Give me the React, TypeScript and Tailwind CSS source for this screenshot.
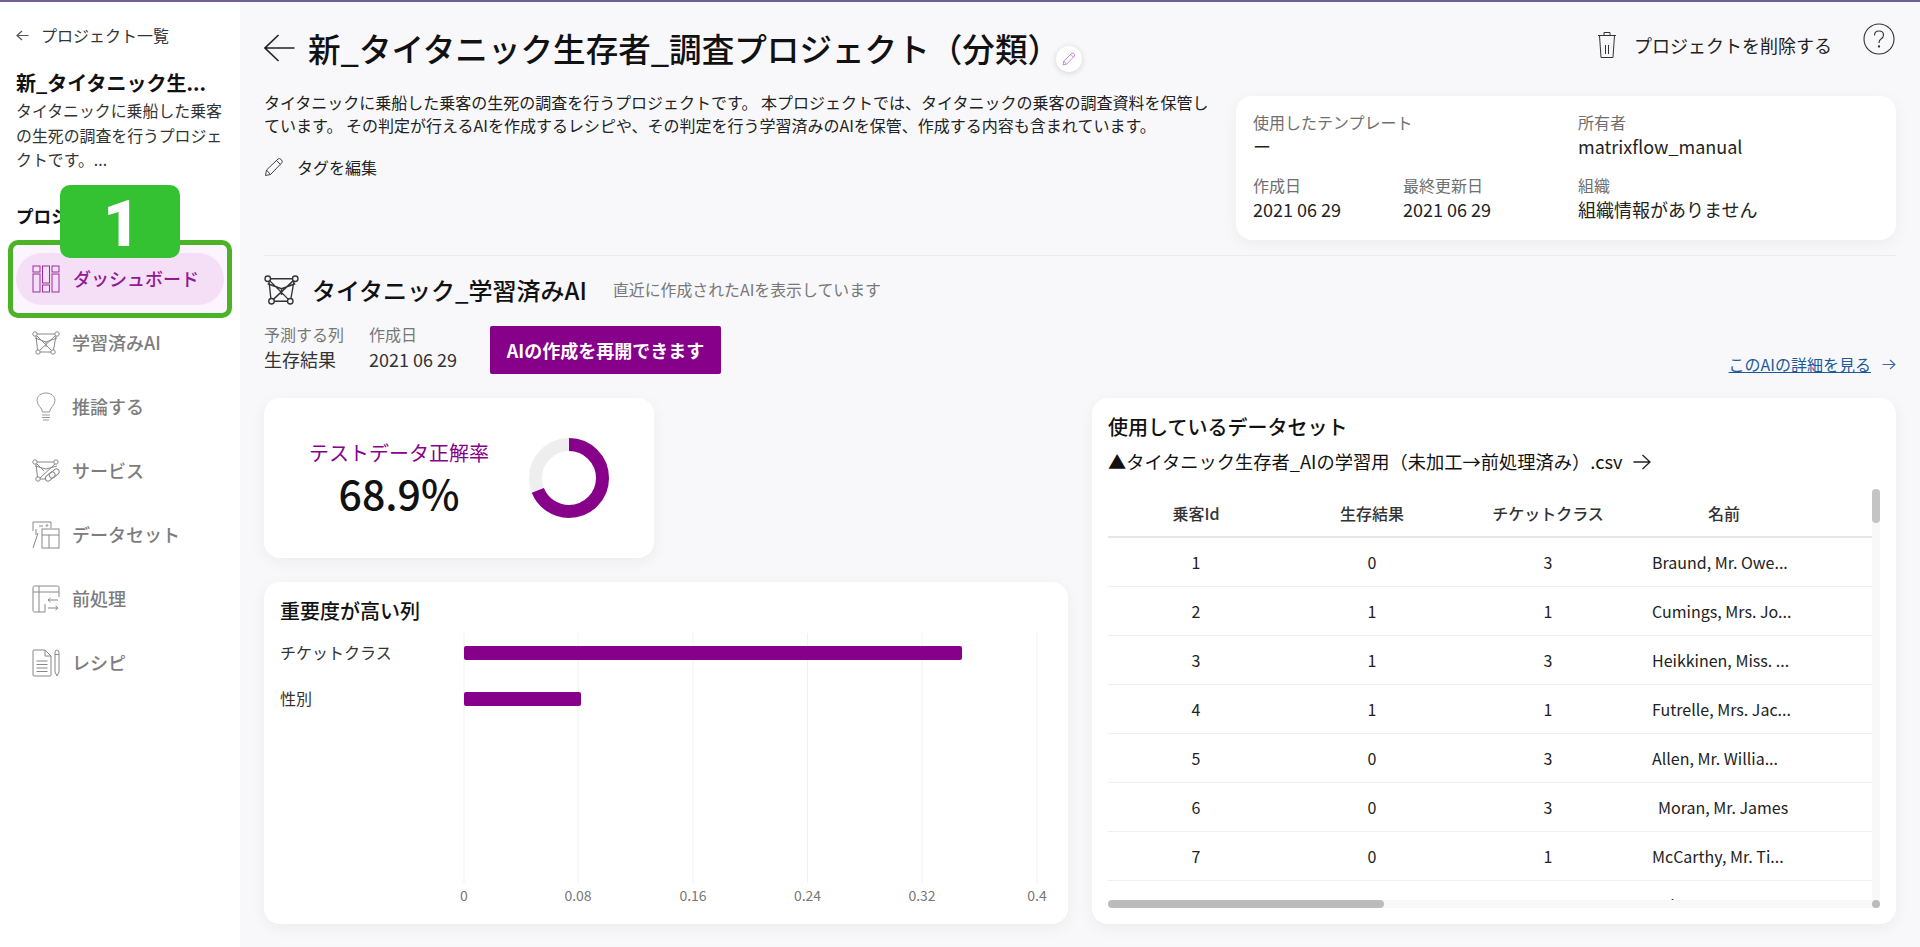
import React from "react";

const P = "#860089";

function Arrow({ w, h, dir = "left", color = "#222", sw = 1.5 }: { w: number; h: number; dir?: "left" | "right"; color?: string; sw?: number }) {
  const d =
    dir === "left"
      ? `M${w - 0.5} ${h / 2}H1M${h / 2 + 0.5} 1L1 ${h / 2}L${h / 2 + 0.5} ${h - 1}`
      : `M0.5 ${h / 2}H${w - 1}M${w - h / 2 - 0.5} 1L${w - 1} ${h / 2}L${w - h / 2 - 0.5} ${h - 1}`;
  return (
    <svg width={w} height={h} viewBox={`0 0 ${w} ${h}`} fill="none" stroke={color} strokeWidth={sw} className="shrink-0">
      <path d={d} />
    </svg>
  );
}

function DashIcon() {
  return (
    <svg width="28" height="28" viewBox="0 0 28 28" fill="none" stroke={P} strokeWidth="1" className="shrink-0 opacity-80">
      <rect x="1" y="1" width="7" height="6" />
      <rect x="1" y="9" width="7" height="18" />
      <rect x="10.5" y="1" width="7" height="17" />
      <rect x="10.5" y="20" width="7" height="7" />
      <rect x="20" y="1" width="7" height="6" />
      <rect x="20" y="9" width="7" height="18" />
    </svg>
  );
}

function NetIcon({ w = 28, h = 24, color = "#888", sw = 1 }: { w?: number; h?: number; color?: string; sw?: number }) {
  return (
    <svg width={w} height={h} viewBox="0 0 28 24" fill="none" stroke={color} strokeWidth={sw} className="shrink-0">
      <circle cx="3" cy="3" r="2.2" />
      <circle cx="25" cy="3" r="2.2" />
      <circle cx="6" cy="21" r="2.2" />
      <circle cx="21" cy="21" r="2.2" />
      <path d="M5 3H23M4 5L5.500 19M24 5L21.500 19M8 21H19M4.500 4.500L19.500 19.500M23.500 4.500L7.500 19.500M3 7L14 11L25 7M14 11L14 16" />
    </svg>
  );
}

function BulbIcon() {
  return (
    <svg width="20" height="30" viewBox="0 0 20 30" fill="none" stroke="#999" strokeWidth="1" className="shrink-0 ml-1">
      <path d="M6.500 20C6 15.500 1 13.500 1 8.500C1 4 5 1 10 1C15 1 19 4 19 8.500C19 13.500 14 15.500 13.500 20Z" />
      <path d="M6 23H14M6 25.500H14M7 28H13" />
    </svg>
  );
}

function ServiceIcon() {
  return (
    <svg width="28" height="24" viewBox="0 0 28 24" fill="none" stroke="#888" strokeWidth="1" className="shrink-0">
      <circle cx="3" cy="3" r="2.200" />
      <circle cx="24" cy="3" r="2.200" />
      <circle cx="6" cy="20" r="2.200" />
      <path d="M5 3H22M4 5L5.500 18M4.500 4.500L12 12M23 5L8 19M3 7L14 10L25 7M8 20H14" />
      <rect x="13" y="15" width="11" height="5.500" rx="2.700" transform="rotate(-40 18 18)" />
      <rect x="17" y="12" width="11" height="5.500" rx="2.700" transform="rotate(-40 22 15)" />
    </svg>
  );
}

function DataIcon() {
  return (
    <svg width="28" height="28" viewBox="0 0 28 28" fill="none" stroke="#888" strokeWidth="1" className="shrink-0">
      <path d="M1 10V1H19V7M1 27L6 12" />
      <rect x="10" y="8" width="17" height="19" />
      <path d="M10 14H27M17 14V27M7 5H11M4 14L4 8" />
      <circle cx="15" cy="4.500" r="0.800" />
    </svg>
  );
}

function PreIcon() {
  return (
    <svg width="28" height="28" viewBox="0 0 28 28" fill="none" stroke="#888" strokeWidth="1" className="shrink-0">
      <path d="M13 27H2.500Q1 27 1 25.500V2.500Q1 1 2.500 1H25.500Q27 1 27 2.500V12" />
      <path d="M1 7H27M7 1V27M13 19V27" />
      <path d="M26 15H16M18.500 13L16 15L18.500 17M16 23H26M23.500 21L26 23L23.500 25" />
    </svg>
  );
}

function RecipeIcon() {
  return (
    <svg width="28" height="28" viewBox="0 0 28 28" fill="none" stroke="#888" strokeWidth="1" className="shrink-0">
      <path d="M1 2Q1 1 2 1H13L19 7V26Q19 27 18 27H2Q1 27 1 26Z" />
      <path d="M13 1V7H19M4.500 12H15.500M4.500 15.500H15.500M4.500 19H15.500M4.500 22.500H15.500" />
      <path d="M23 3.500Q23 1 25 1Q27 1 27 3.500V23L25 27L23 23Z" />
      <path d="M23 5.500H27" />
    </svg>
  );
}

function PencilIcon({ size, color, sw = 1 }: { size: number; color: string; sw?: number }) {
  return (
    <svg width={size} height={size} viewBox="0 0 20 20" fill="none" stroke={color} strokeWidth={sw} className="shrink-0">
      <path d="M1.500 18.500L2.500 13L14 2Q15.500 0.800 17.200 2.500Q19 4.300 17.800 5.800L6.500 17.500Z" />
      <path d="M2.500 13L6.500 17.500M12.500 3.500L16.500 7.500" />
    </svg>
  );
}

function TrashIcon() {
  return (
    <svg width="20" height="28" viewBox="0 0 20 28" fill="none" stroke="#333" strokeWidth="1" className="shrink-0">
      <path d="M1 4.500H19M7 4.500V1.500H13V4.500" />
      <path d="M2.500 4.500L4 26.500H16L17.500 4.500" />
      <path d="M8.500 14V23M11.500 14V23" />
    </svg>
  );
}

function HelpIcon() {
  return (
    <svg width="32" height="32" viewBox="0 0 32 32" fill="none" stroke="#333" strokeWidth="1.100" className="shrink-0">
      <circle cx="16" cy="16" r="15" />
      <path d="M11.500 12.500Q11.500 8 16 8Q20.500 8 20.500 12Q20.500 14.500 18 16Q16 17.200 16 20" />
      <circle cx="16" cy="23.500" r="0.600" />
    </svg>
  );
}

function Donut() {
  const r = 33.5;
  const c = 2 * Math.PI * r;
  return (
    <svg width="80" height="80" viewBox="0 0 80 80" fill="none" strokeWidth="13" className="shrink-0">
      <circle cx="40" cy="40" r={r} stroke="#eeeeee" />
      <circle cx="40" cy="40" r={r} stroke={P} strokeDasharray={`${c * 0.689} ${c}`} transform="rotate(-90 40 40)" />
    </svg>
  );
}

const NAV = [
  { label: "学習済みAI", icon: <NetIcon /> },
  { label: "推論する", icon: <BulbIcon /> },
  { label: "サービス", icon: <ServiceIcon /> },
  { label: "データセット", icon: <DataIcon /> },
  { label: "前処理", icon: <PreIcon /> },
  { label: "レシピ", icon: <RecipeIcon /> },
];

const ROWS = [
  ["1", "0", "3", "Braund, Mr. Owe..."],
  ["2", "1", "1", "Cumings, Mrs. Jo..."],
  ["3", "1", "3", "Heikkinen, Miss. ..."],
  ["4", "1", "1", "Futrelle, Mrs. Jac..."],
  ["5", "0", "3", "Allen, Mr. Willia..."],
  ["6", "0", "3", "Moran, Mr. James"],
  ["7", "0", "1", "McCarthy, Mr. Ti..."],
  ["8", "0", "3", "Palsson, Maste..."],
];

function Sidebar() {
  return (
    <aside className="w-[240px] shrink-0 bg-white flex flex-col">
      <div className="flex items-center gap-[12px] pl-4 pt-[20px] h-[46px] text-[16px] leading-6 text-[#333]">
        <Arrow w={13} h={11} color="#555" sw={1.2} />
        <span>プロジェクト一覧</span>
      </div>
      <div className="pl-4 pr-3 pt-[22px]">
        <div className="text-[20px] leading-[26px] font-bold text-[#111] whitespace-nowrap">新_タイタニック生...</div>
        <p className="text-[15.9px] leading-[24.5px] text-[#333] w-[214px] mt-[3px]">タイタニックに乗船した乗客の生死の調査を行うプロジェクトです。...</p>
      </div>
      <div className="relative pl-4 mt-[30px] text-[17.6px] leading-[26px] font-bold text-[#111]">
        プロジェクト
        <div className="absolute left-[60px] top-[-18px] w-[120px] h-[73px] rounded-[10px] bg-[#34c232] z-20 flex items-center justify-center pt-[7px] pl-[3px] text-white text-[64px] font-black font-['Roboto',sans-serif]">
          1
        </div>
      </div>
      <div className="mx-2 mt-[11px] h-[78px] rounded-[10px] border-[5px] border-[#4bb325] bg-[#fcf5ff] flex items-center relative z-10">
        <div className="ml-[3px] w-[208px] h-[52px] rounded-full bg-[#f4dff7] flex items-center gap-[13px] pl-[16px] text-[18px] font-medium text-[#8f1a93]">
          <DashIcon />
          <span>ダッシュボード</span>
        </div>
      </div>
      <div className="flex flex-col">
        {NAV.map((n) => (
          <div key={n.label} className="flex items-center h-[64px] pl-8 text-[18px] font-medium text-[#7d7d7d] first:mt-[-7px]">
            <div className="w-[40px] flex items-center justify-start">{n.icon}</div>
            <span>{n.label}</span>
          </div>
        ))}
      </div>
    </aside>
  );
}

function Meta({ label, value, className = "" }: { label: string; value: string; className?: string }) {
  return (
    <div className={className}>
      <div className="text-[16px] leading-[24px] text-[#6f6f6f]">{label}</div>
      <div className="text-[18px] leading-[25px] text-[#222] whitespace-nowrap">{value}</div>
    </div>
  );
}

function Header() {
  return (
    <div className="flex h-[254px] border-b border-[#ececf0]">
      <div className="flex-1 min-w-0 pt-[27px]">
        <div className="flex items-center h-[38px]">
          <Arrow w={31} h={28} sw={1.6} />
          <h1 className="ml-[13px] text-[32.6px] leading-[38px] font-medium text-[#111] whitespace-nowrap">新_タイタニック生存者_調査プロジェクト（分類）</h1>
          <div className="-ml-[4px] mt-[22px] w-[26px] h-[26px] rounded-full bg-white shadow-[0_1px_6px_rgba(0,0,0,0.15)] flex items-center justify-center">
            <PencilIcon size={14} color="#b55cc0" />
          </div>
        </div>
        <p className="mt-[24px] text-[16px] leading-[23px] text-[#222] whitespace-nowrap">
          タイタニックに乗船した乗客の生死の調査を行うプロジェクトです。 本プロジェクトでは、タイタニックの乗客の調査資料を保管し
          <br />
          ています。 その判定が行えるAIを作成するレシピや、その判定を行う学習済みのAIを保管、作成する内容も含まれています。
        </p>
        <div className="mt-[18px] flex items-center gap-[13px] text-[16px] leading-6 text-[#222]">
          <PencilIcon size={20} color="#444" />
          <span>タグを編集</span>
        </div>
      </div>
      <div className="w-[660px] shrink-0 flex flex-col">
        <div className="h-[94px] flex items-start justify-end pt-[22px]">
          <div className="flex items-center gap-[17px] h-[44px] mr-[31px] mt-[-1px] text-[18px] text-[#222]">
            <TrashIcon />
            <span>プロジェクトを削除する</span>
          </div>
          <div className="mr-[1px] mt-[-1px]">
            <HelpIcon />
          </div>
        </div>
        <div className="h-[144px] rounded-[16px] bg-white shadow-[0_4px_16px_rgba(0,0,0,0.05)] pl-[17px] pt-[14px] grid grid-cols-[150px_175px_1fr] grid-rows-[63px_1fr]">
          <Meta label="使用したテンプレート" value="ー" className="col-span-2" />
          <Meta label="所有者" value="matrixflow_manual" />
          <Meta label="作成日" value="2021 06 29" />
          <Meta label="最終更新日" value="2021 06 29" />
          <Meta label="組織" value="組織情報がありません" />
        </div>
      </div>
    </div>
  );
}

function ModelSection() {
  return (
    <div className="flex flex-col h-[142px]">
      <div className="flex items-center h-[34px] mt-[17px]">
        <NetIcon w={35} h={30} color="#333" sw={1.1} />
        <h2 className="ml-[13px] text-[24px] leading-[34px] font-medium text-[#111] whitespace-nowrap">タイタニック_学習済みAI</h2>
        <span className="ml-[26px] text-[15.9px] text-[#777]">直近に作成されたAIを表示しています</span>
      </div>
      <div className="flex items-end mt-[15px]">
        <div className="w-[105px]">
          <div className="text-[16px] leading-[24px] text-[#777]">予測する列</div>
          <div className="text-[18px] leading-[26px] text-[#333]">生存結果</div>
        </div>
        <div className="w-[121px]">
          <div className="text-[16px] leading-[24px] text-[#777]">作成日</div>
          <div className="text-[18px] leading-[26px] text-[#333]">2021 06 29</div>
        </div>
        <button className="w-[231px] h-[48px] mb-[-2px] rounded-[2px] bg-[#860089] text-white text-[18px] font-bold">AIの作成を再開できます</button>
        <div className="ml-auto flex items-center gap-[11px] mb-[-4px] text-[16px] text-[#1c5a9c]">
          <span className="underline">このAIの詳細を見る</span>
          <Arrow w={14} h={11} dir="right" color="#3a6ea5" sw={1.1} />
        </div>
      </div>
    </div>
  );
}

function AccuracyCard() {
  return (
    <div className="w-[390px] h-[160px] rounded-[16px] bg-white shadow-[0_4px_16px_rgba(0,0,0,0.05)] flex items-center pl-[45px]">
      <div className="w-[180px] flex flex-col items-center">
        <div className="text-[20px] leading-[28px] text-[#860089] whitespace-nowrap">テストデータ正解率</div>
        <div className="text-[41px] leading-[50px] font-medium text-[#111]">68.9%</div>
      </div>
      <div className="ml-[40px]">
        <Donut />
      </div>
    </div>
  );
}

function ImportanceCard() {
  const ticks = ["0", "0.08", "0.16", "0.24", "0.32", "0.4"];
  return (
    <div className="flex-1 rounded-[16px] bg-white shadow-[0_4px_16px_rgba(0,0,0,0.05)] pl-4 pt-[14px]">
      <h3 className="text-[20px] leading-[30px] font-medium text-[#111]">重要度が高い列</h3>
      <div className="flex mt-[7px]">
        <div className="w-[184px] shrink-0 pt-[3px] flex flex-col gap-[14px] text-[16px] leading-[32px] text-[#333]">
          <div>チケットクラス</div>
          <div>性別</div>
        </div>
        <svg width="600" height="280" viewBox="0 0 600 280" className="shrink-0 -ml-[1px] overflow-visible" fontFamily="'Noto Sans CJK JP', sans-serif">
          {[1, 115, 230, 344.5, 459, 574].map((x, i) => (
            <g key={i}>
              <line x1={x} x2={x} y1="0" y2="250" stroke="#f1f1f3" />
              <text x={x} y="268" textAnchor="middle" fontSize="14" fill="#777">
                {ticks[i]}
              </text>
            </g>
          ))}
          <rect x="1" y="13" width="498" height="14" rx="2" fill={P} />
          <rect x="1" y="59" width="117" height="14" rx="2" fill={P} />
        </svg>
      </div>
    </div>
  );
}

function DatasetCard() {
  return (
    <div className="h-[526px] rounded-[16px] bg-white shadow-[0_4px_16px_rgba(0,0,0,0.05)] px-4 pt-[14px]">
      <h3 className="text-[20px] leading-[30px] font-medium text-[#111]">使用しているデータセット</h3>
      <div className="flex items-center gap-[10px] mt-[5px] h-[30px] text-[18.25px] text-[#111] whitespace-nowrap">
        <span>▲タイタニック生存者_AIの学習用（未加工→前処理済み）.csv</span>
        <Arrow w={18} h={16} dir="right" sw={1.3} />
      </div>
      <div className="relative mt-[12px] h-[419px] overflow-hidden">
        <table className="w-[764px] table-fixed border-collapse text-[16px] text-[#222]">
          <colgroup>
            <col className="w-[176px]" />
            <col className="w-[176px]" />
            <col className="w-[176px]" />
            <col className="w-[176px]" />
            <col />
          </colgroup>
          <thead>
            <tr className="h-[48px] border-b-2 border-[#e6e6e6]">
              {["乗客Id", "生存結果", "チケットクラス", "名前", ""].map((h, i) => (
                <th key={i} className="font-medium text-[16px] text-[#333] text-center">
                  {h}
                </th>
              ))}
            </tr>
          </thead>
          <tbody>
            {ROWS.map((r) => (
              <tr key={r[0]} className="h-[49px] border-b border-[#efefef]">
                <td className="text-center">{r[0]}</td>
                <td className="text-center">{r[1]}</td>
                <td className="text-center">{r[2]}</td>
                <td className={r[0] === "6" ? "text-left whitespace-nowrap pl-[22px]" : "text-left whitespace-nowrap pl-4"}>{r[3]}</td>
                <td />
              </tr>
            ))}
          </tbody>
        </table>
        <div className="absolute right-0 top-0 bottom-0 w-2 bg-[#f8f8f9]">
          <div className="h-[34px] w-2 rounded-full bg-[#c4c4c4]" />
        </div>
        <div className="absolute left-0 right-2 bottom-0 h-2 bg-[#f8f8f9]">
          <div className="h-2 w-[276px] rounded-full bg-[#bbbbbb]" />
        </div>
        <div className="absolute right-0 bottom-0 h-2 w-2 rounded-full bg-[#bbbbbb]" />
      </div>
    </div>
  );
}

export default function App() {
  return (
    <div className="h-[947px] w-[1920px] overflow-hidden border-t-2 border-[#6f5f95] bg-[#f8f8fb] flex font-['Noto_Sans_CJK_JP',sans-serif]">
      <Sidebar />
      <main className="flex-1 min-w-0 px-6 flex flex-col">
        <Header />
        <ModelSection />
        <div className="grid grid-cols-2 gap-6">
          <div className="flex flex-col gap-6 h-[526px]">
            <AccuracyCard />
            <ImportanceCard />
          </div>
          <DatasetCard />
        </div>
      </main>
    </div>
  );
}
